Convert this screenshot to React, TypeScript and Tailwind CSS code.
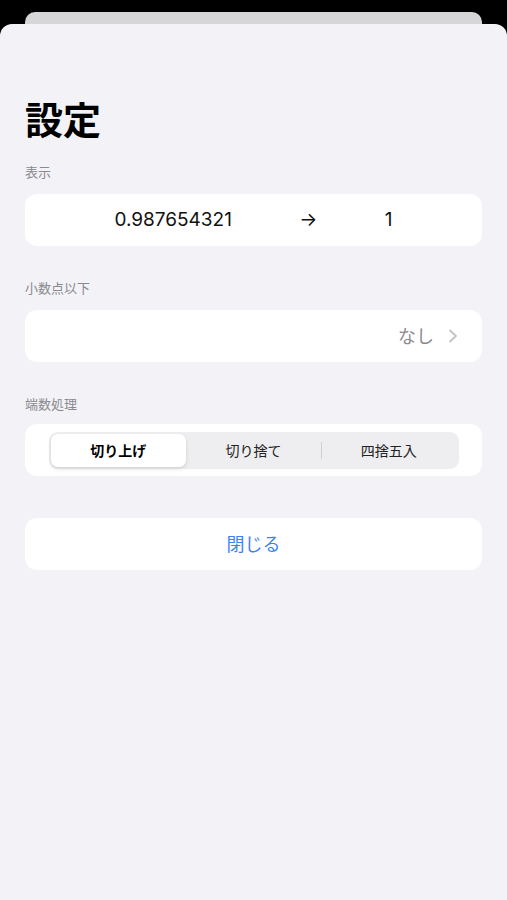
const font = { fontFamily: 'Inter, "Noto Sans CJK JP", sans-serif' };

function SectionLabel({ children }: { children: string }) {
    return <div className="px-[25px] text-[13px] leading-[18px] text-[#8a8a8e]">{children}</div>;
}

function Chevron() {
    return (
        <svg width="10" height="14" viewBox="0 0 10 14" className="ml-[14px]">
            <polyline points="2,1.5 8,7 2,12.5" fill="none" stroke="#c2c2c6" strokeWidth="1.8" strokeLinecap="round" strokeLinejoin="round" />
        </svg>
    );
}

export default function App() {
    const options = ['切り上げ', '切り捨て', '四捨五入'];
    const selected = 0;

    return (
        <div className="w-[507px] h-[900px] bg-black overflow-hidden flex flex-col" style={font}>
            <div className="mx-[25px] mt-[12px] h-[12px] shrink-0 rounded-t-[10px] bg-[#d6d6d8]" />
            <div className="flex-1 rounded-t-[12px] bg-[#f2f2f7] flex flex-col">
                <h1 className="px-[25px] pt-[74px] text-[38px] leading-[44px] font-bold text-black">設定</h1>

                <div className="mt-[21px]">
                    <SectionLabel>表示</SectionLabel>
                    <div className="mx-[25px] mt-[13px] h-[52px] rounded-[12px] bg-white flex items-center justify-evenly px-[22px] text-[19px] text-[#111]">
                        <span>0.987654321</span>
                        <span>→</span>
                        <span>1</span>
                    </div>
                </div>

                <div className="mt-[33px]">
                    <SectionLabel>小数点以下</SectionLabel>
                    <div className="mx-[25px] mt-[13px] h-[52px] rounded-[12px] bg-white flex items-center justify-end pr-[24px] text-[18px] text-[#8a8a8e]">
                        <span>なし</span>
                        <Chevron />
                    </div>
                </div>

                <div className="mt-[33px]">
                    <SectionLabel>端数処理</SectionLabel>
                    <div className="mx-[25px] mt-[11px] h-[52px] rounded-[12px] bg-white flex items-center justify-center">
                        <div className="w-[410px] h-[37px] rounded-[9px] bg-[#eeeef0] p-[2px] flex items-stretch">
                            {options.map((o, i) => (
                                <div key={o} className="flex-1 flex items-center relative">
                                    {i > 0 && i !== selected && i - 1 !== selected && (
                                        <div className="absolute left-0 top-[8px] bottom-[8px] w-px bg-[#d0d0d4]" />
                                    )}
                                    <div
                                        className={
                                            i === selected
                                                ? 'w-full h-full rounded-[7px] bg-white shadow-[0_2px_4px_rgba(0,0,0,0.12)] flex items-center justify-center text-[14px] font-bold text-black'
                                                : 'w-full h-full flex items-center justify-center text-[14px] text-[#222]'
                                        }
                                    >
                                        {o}
                                    </div>
                                </div>
                            ))}
                        </div>
                    </div>
                </div>

                <div className="mx-[25px] mt-[42px] h-[52px] rounded-[12px] bg-white flex items-center justify-center text-[18px] text-[#3b82f6]">
                    閉じる
                </div>
            </div>
        </div>
    );
}
